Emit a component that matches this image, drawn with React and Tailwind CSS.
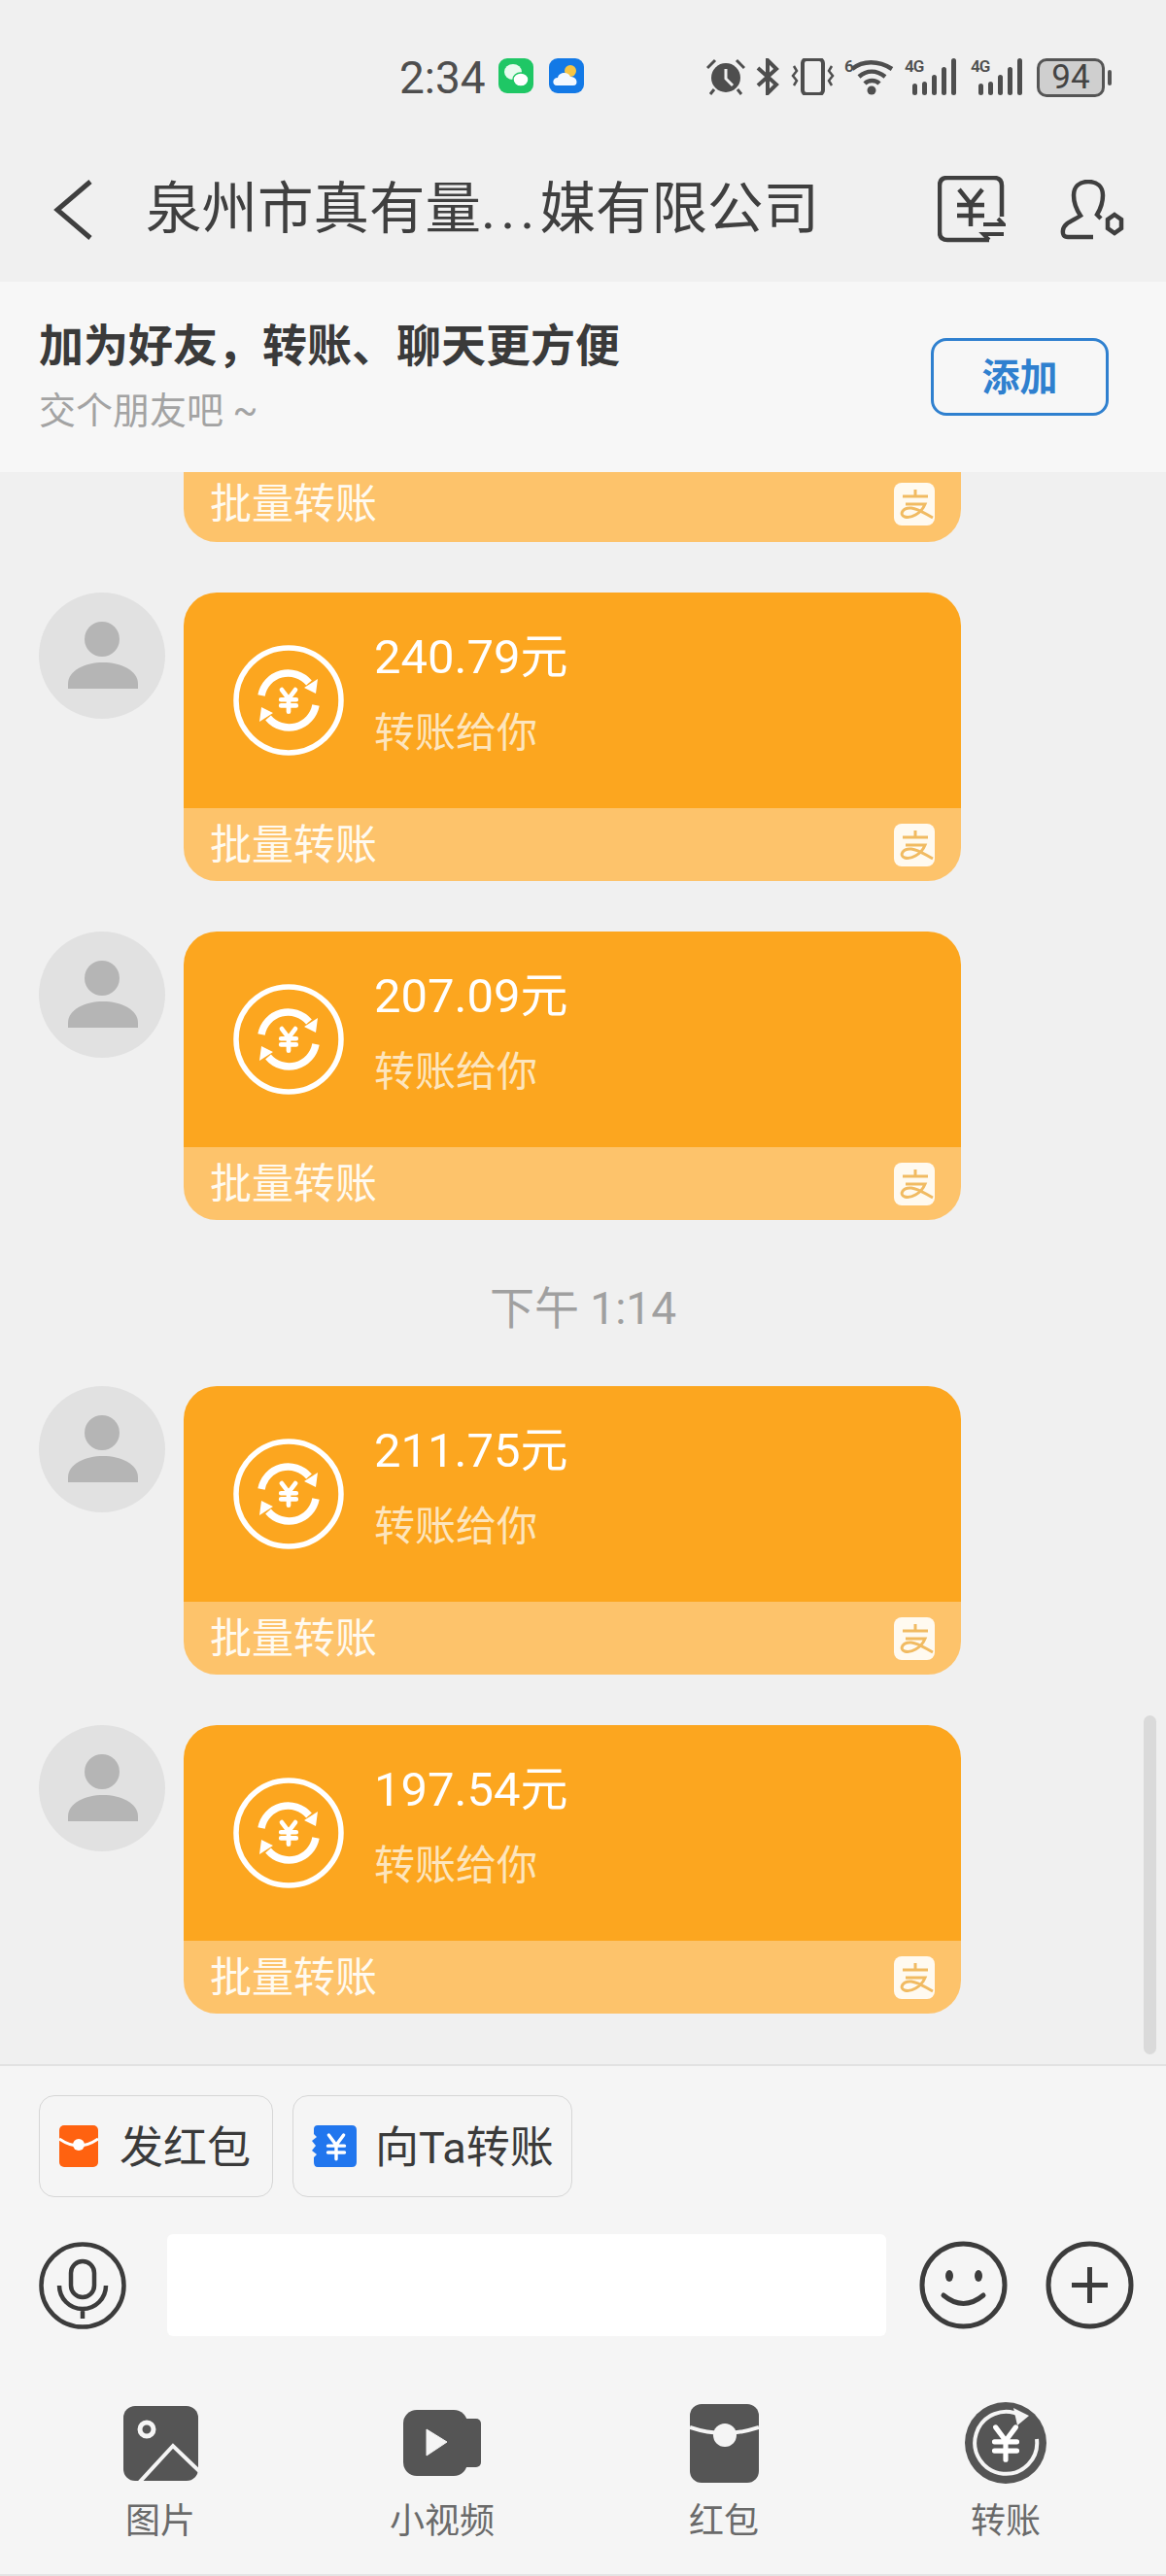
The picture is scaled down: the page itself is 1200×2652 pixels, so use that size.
import React from 'react';

const transfers = [
  { amount: '240.79元' },
  { amount: '207.09元' },
  { time: '下午 1:14' },
  { amount: '211.75元' },
  { amount: '197.54元' },
];

const Yen = ({ x, y, s = 1, color = '#fff', w = 4 }) => (
  <g transform={`translate(${x} ${y}) scale(${s})`} fill="none" stroke={color} strokeWidth={w} strokeLinecap="round">
    <path d="M-9 -14 L0 -2 L9 -14 M0 -2 V15 M-10 -1 H10 M-10 7 H10" />
  </g>
);

const TransferIcon = () => (
  <svg width="114" height="114" viewBox="0 0 114 114" fill="none" stroke="#fff" className="shrink-0">
    <circle cx="57" cy="57" r="54" strokeWidth="5.5" />
    <path d="M29 52 A28 28 0 0 1 78 39" strokeWidth="7.5" />
    <path d="M85 62 A28 28 0 0 1 36 75" strokeWidth="7.5" />
    <path d="M73 44 L87 35 L85 50 Z M41 70 L27 79 L29 64 Z" fill="#fff" stroke="none" />
    <Yen x={57} y={57} s={0.78} w={6} />
  </svg>
);

const AlipayIcon = () => (
  <svg width="42" height="44" viewBox="0 0 42 44" fill="none">
    <rect width="42" height="44" rx="8" fill="#fffaf0" />
    <path d="M9 14 H35 M22 7 V14 M12 22 H32 C28 32 17 37 11 35 C5 33 9 25 18 26 C26 27 32 32 40 36" stroke="#f1bb62" strokeWidth="3" />
  </svg>
);

const Avatar = () => (
  <div className="w-[130px] h-[130px] shrink-0 rounded-full bg-[#e1e1e1] flex items-center justify-center">
    <svg width="130" height="130" viewBox="0 0 130 130" fill="#b5b5b5">
      <ellipse cx="65" cy="48" rx="18" ry="18" />
      <path d="M30 99 V94 C30 80 48 72 66 72 C84 72 102 80 102 94 V99 Z" />
    </svg>
  </div>
);

const CardFooter = ({ className }) => (
  <div className={`bg-[#fdc36b] flex items-center justify-between pl-[27px] pr-[27px] ${className}`}>
    <span className="text-[43px] leading-[50px] text-[#fffaf0]">批量转账</span>
    <AlipayIcon />
  </div>
);

const TransferCard = ({ amount }) => (
  <div className="flex pl-[40px]">
    <Avatar />
    <div className="ml-[19px] w-[800px] rounded-[34px] overflow-hidden">
      <div className="h-[222px] bg-[#fca61f] flex items-center pl-[51px]">
        <TransferIcon />
        <div className="ml-[31px] self-start mt-[37px]">
          <div className="text-[49px] leading-[60px] text-white">{amount}</div>
          <div className="mt-[20px] text-[42px] leading-[56px] text-[#fde5bd]">转账给你</div>
        </div>
      </div>
      <CardFooter className="h-[75px]" />
    </div>
  </div>
);

const Signal = () => (
  <div className="relative w-[55px] h-[38px]">
    <span className="absolute left-0 top-0 text-[17px] leading-[17px] font-semibold text-[#4e4e4e] tracking-[-1px]">4G</span>
    <svg width="55" height="38" viewBox="0 0 55 38" fill="#4e4e4e">
      <rect x="8" y="26" width="5" height="12" rx="2.5" />
      <rect x="18" y="24" width="5" height="14" rx="2.5" />
      <rect x="28" y="17" width="5" height="21" rx="2.5" />
      <rect x="38" y="9" width="5" height="29" rx="2.5" />
      <rect x="48" y="0" width="5" height="38" rx="2.5" />
    </svg>
  </div>
);

const StatusBar = () => (
  <div className="h-[150px] pl-[411px] pt-[60px] flex items-start">
    <span className="w-[102px] text-[46px] leading-[40px] text-[#4e4e4e]">2:34</span>
    <svg width="36" height="36" viewBox="0 0 36 36">
      <rect width="36" height="36" rx="9" fill="#1fc765" />
      <ellipse cx="15" cy="14" rx="9" ry="8" fill="#e8fbef" />
      <ellipse cx="23" cy="22" rx="8" ry="7" fill="#fff" stroke="#1fc765" strokeWidth="1.5" />
    </svg>
    <svg width="36" height="36" viewBox="0 0 36 36" className="ml-[16px]">
      <rect width="36" height="36" rx="9" fill="#1379e6" />
      <circle cx="22" cy="13" r="6" fill="#f6c544" />
      <path d="M8 28 C3 28 3 20 9 20 C10 14 20 13 22 19 C29 18 31 28 25 28 Z" fill="#f2f8ff" />
    </svg>
    <svg width="40" height="38" viewBox="0 0 40 38" className="ml-[126px]" fill="#4e4e4e">
      <circle cx="20" cy="20" r="15" />
      <path d="M20 11 V21 L27 28" stroke="#f0f0f0" strokeWidth="3" fill="none" />
      <path d="M1 10 L9 2 M39 10 L31 2 M8 32 L4 37 M32 32 L36 37" stroke="#4e4e4e" strokeWidth="3" />
    </svg>
    <svg width="24" height="38" viewBox="0 0 24 38" className="ml-[11px]" fill="none" stroke="#4e4e4e" strokeWidth="4">
      <path d="M2 10 L21 27 L12 36 V2 L21 11 L2 28" />
    </svg>
    <svg width="45" height="38" viewBox="0 0 45 38" className="ml-[12px]" fill="none" stroke="#4e4e4e" strokeWidth="3">
      <rect x="12" y="1" width="21" height="36" rx="4" strokeWidth="4" />
      <path d="M3 8 L6 13 L2 18 L6 23 L3 28 M42 8 L39 13 L43 18 L39 23 L42 28" strokeWidth="2.5" />
    </svg>
    <div className="ml-[10px] w-[52px] h-[38px] relative">
      <span className="absolute left-0 top-0 text-[17px] leading-[17px] font-semibold text-[#4e4e4e]">6</span>
      <svg width="52" height="38" viewBox="0 0 52 38" fill="none" stroke="#4e4e4e" strokeWidth="4.5">
        <path d="M8 11 C19 2 35 2 49 11 M15 19 C23 12 33 12 42 19 M21 26 C25 22 32 22 36 26" />
        <circle cx="28" cy="33" r="4.5" fill="#4e4e4e" stroke="none" />
      </svg>
    </div>
    <div className="ml-[10px]"><Signal /></div>
    <div className="ml-[13px]"><Signal /></div>
    <div className="ml-[13px] w-[70px] h-[40px] rounded-[10px] border-[3px] border-[#555] bg-[#cfcfcf] flex items-center justify-center text-[35px] leading-[34px] text-[#444]">94</div>
    <div className="ml-[3px] mt-[12px] w-[4px] h-[16px] rounded-full bg-[#555]"></div>
  </div>
);

const NavBar = () => (
  <div className="h-[140px] pl-[55px] pb-[8px] flex items-center">
    <svg width="42" height="62" viewBox="0 0 42 62" fill="none" stroke="#3f3f3f" strokeWidth="5">
      <path d="M38 2 L4 31 L38 60" />
    </svg>
    <span className="ml-[53px] text-[57.5px] leading-[70px] text-[#3f3f3f] whitespace-nowrap">泉州市真有量<span className="tracking-[5px]">...</span>媒有限公司</span>
    <svg width="70" height="70" viewBox="0 0 70 70" fill="none" stroke="#3f3f3f" strokeWidth="4.5" className="ml-[122px] -mt-[1px]">
      <path d="M53 66 H10 Q2 66 2 58 V10 Q2 2 10 2 H58 Q66 2 66 10 V42" />
      <path d="M22 14 L34 29 L46 14 M34 29 V52 M20 30 H48 M20 41 H48" />
      <path d="M47 50 H68 L62 44 M68 60 H47 L53 66" strokeWidth="4" />
    </svg>
    <svg width="66" height="62" viewBox="0 0 66 62" fill="none" stroke="#3f3f3f" strokeWidth="4.5" className="ml-[56px]">
      <path d="M34 59 H8 Q2 59 3 52 C4 44 14 42 21 37 C17 31 14 25 14 16 C14 7 20 2 29 2 C38 2 44 7 44 16 C44 25 41 31 38 36 L42 40" />
      <path d="M56 36 L63 41 V50 L56 55 L49 50 V41 Z" />
    </svg>
  </div>
);

const RedPacketSmall = () => (
  <svg width="40" height="43" viewBox="0 0 40 43">
    <rect width="40" height="43" rx="5" fill="#ff6210" />
    <path d="M0 14 Q20 28 40 14" fill="none" stroke="#fff" strokeWidth="3" />
    <circle cx="20" cy="20" r="6" fill="#fff" />
  </svg>
);

const TransferSmall = () => (
  <svg width="46" height="43" viewBox="0 0 46 43">
    <path d="M6 0 H41 Q46 0 46 5 V38 Q46 43 41 43 H6 Q2 43 2 38 V33 L5 30 L0 26 L4 21 L0 16 L5 12 L2 9 V4 Q2 0 6 0 Z" fill="#2176ee" />
    <Yen x={25} y={22} s={0.85} w={4} />
  </svg>
);

const ImageTab = () => (
  <svg width="77" height="77" viewBox="0 0 77 77">
    <rect width="77" height="77" rx="12" fill="#555" />
    <circle cx="24" cy="24" r="7" fill="#555" stroke="#f5f5f5" strokeWidth="5" />
    <path d="M16 79 L51 41 L79 68" fill="none" stroke="#f5f5f5" strokeWidth="4" />
  </svg>
);

const VideoTab = () => (
  <svg width="80" height="68" viewBox="0 0 80 68" fill="#555">
    <rect width="66" height="68" rx="14" />
    <rect x="60" y="9" width="20" height="50" rx="5" />
    <path d="M24 20 L45 33 L24 47 Z" fill="#f5f5f5" stroke="#f5f5f5" strokeWidth="1" strokeLinejoin="round" />
  </svg>
);

const PacketTab = () => (
  <svg width="71" height="81" viewBox="0 0 71 81">
    <rect width="71" height="81" rx="12" fill="#555" />
    <path d="M0 24 Q35 36 71 24" fill="none" stroke="#f5f5f5" strokeWidth="4" />
    <circle cx="36" cy="32" r="12" fill="#f5f5f5" />
  </svg>
);

const TransferTab = () => (
  <svg width="84" height="84" viewBox="0 0 84 84">
    <circle cx="42" cy="42" r="42" fill="#555" />
    <path d="M58 14 A32 32 0 1 0 74 38" fill="none" stroke="#f5f5f5" strokeWidth="4" />
    <path d="M50 6 L66 14 L54 24 Z" fill="#f5f5f5" />
    <Yen x={42} y={42} s={1.15} w={4.5} />
  </svg>
);

const tabs = [
  { label: '图片', Icon: ImageTab },
  { label: '小视频', Icon: VideoTab },
  { label: '红包', Icon: PacketTab },
  { label: '转账', Icon: TransferTab },
];

export default function App() {
  return (
    <div className="w-[1200px] h-[2652px] flex flex-col bg-[#f0f0f0] overflow-hidden font-[Roboto,'Noto_Sans_CJK_SC',sans-serif]">
      <StatusBar />
      <NavBar />

      {/* Add friend banner */}
      <div className="h-[196px] shrink-0 bg-[#f7f7f7] flex items-center justify-between pl-[40px] pr-[59px]">
        <div>
          <div className="text-[46px] leading-[56px] font-bold text-[#3a3a3a]">加为好友，转账、聊天更方便</div>
          <div className="mt-[14px] text-[38px] leading-[50px] text-[#a3a3a3]">交个朋友吧 ~</div>
        </div>
        <button className="w-[183px] h-[80px] rounded-[16px] border-[3px] border-[#2f80cf] pt-[2px] text-[39px] font-bold text-[#2f80cf]">添加</button>
      </div>

      {/* Chat */}
      <div className="relative h-[1639px] shrink-0 flex flex-col gap-[52px]">
        <div className="ml-[189px] w-[800px] rounded-b-[34px] overflow-hidden">
          <CardFooter className="h-[72px] pb-[6px]" />
        </div>
        {transfers.map((t, i) =>
          t.time ? (
            <div key={i} className="h-[67px] pt-[12px] flex items-center justify-center text-[46px] text-[#a0a0a0]">{t.time}</div>
          ) : (
            <TransferCard key={i} amount={t.amount} />
          )
        )}
        <div className="absolute left-[1177px] top-[1280px] w-[13px] h-[349px] rounded-full bg-[#dadada]"></div>
      </div>

      {/* Bottom bar */}
      <div className="flex-1 bg-[#f5f5f5] border-t-[2px] border-b-[2px] border-t-[#e2e2e2] border-b-[#e4e4e4]">
        <div className="flex pl-[40px] pt-[30px]">
          <div className="w-[241px] h-[105px] rounded-[16px] border border-[#d6d6d6] flex items-center pl-[20px]">
            <RedPacketSmall />
            <span className="ml-[22px] pt-[4px] text-[45px] text-[#3a3a3a]">发红包</span>
          </div>
          <div className="ml-[20px] w-[288px] h-[105px] rounded-[16px] border border-[#d6d6d6] flex items-center pl-[19px]">
            <TransferSmall />
            <span className="ml-[19px] pt-[4px] text-[45px] text-[#3a3a3a]">向Ta转账</span>
          </div>
        </div>

        <div className="mt-[38px] h-[105px] flex items-center pl-[40px]">
          <svg width="90" height="90" viewBox="0 0 90 90" fill="none" stroke="#3c3c3c" strokeWidth="4.5">
            <circle cx="45" cy="45" r="42.5" />
            <rect x="33" y="20" width="24" height="37" rx="12" />
            <path d="M21 45 A24 24 0 0 0 69 45 M45 69 V79" />
          </svg>
          <div className="ml-[42px] w-[740px] h-[105px] rounded-[6px] bg-white"></div>
          <svg width="91" height="91" viewBox="0 0 91 91" fill="none" stroke="#3c3c3c" strokeWidth="5" className="ml-[34px]">
            <circle cx="45.5" cy="45.5" r="42.5" />
            <ellipse cx="31" cy="36" rx="4" ry="6" fill="#3c3c3c" stroke="none" />
            <ellipse cx="61" cy="36" rx="4" ry="6" fill="#3c3c3c" stroke="none" />
            <path d="M25 56 Q45.5 73 66 56" strokeLinecap="round" />
          </svg>
          <svg width="91" height="91" viewBox="0 0 91 91" fill="none" stroke="#3c3c3c" strokeWidth="5" className="ml-[39px]">
            <circle cx="45.5" cy="45.5" r="42.5" />
            <path d="M27 45.5 H64 M45.5 27 V64" />
          </svg>
        </div>

        <div className="mt-[66px] grid grid-cols-4 px-[20px]">
          {tabs.map(({ label, Icon }) => (
            <div key={label} className="flex flex-col items-center">
              <div className="h-[88px] flex items-center justify-center"><Icon /></div>
              <span className="mt-[12px] text-[36px] leading-[50px] text-[#6a6a6a]">{label}</span>
            </div>
          ))}
        </div>
      </div>
    </div>
  );
}
